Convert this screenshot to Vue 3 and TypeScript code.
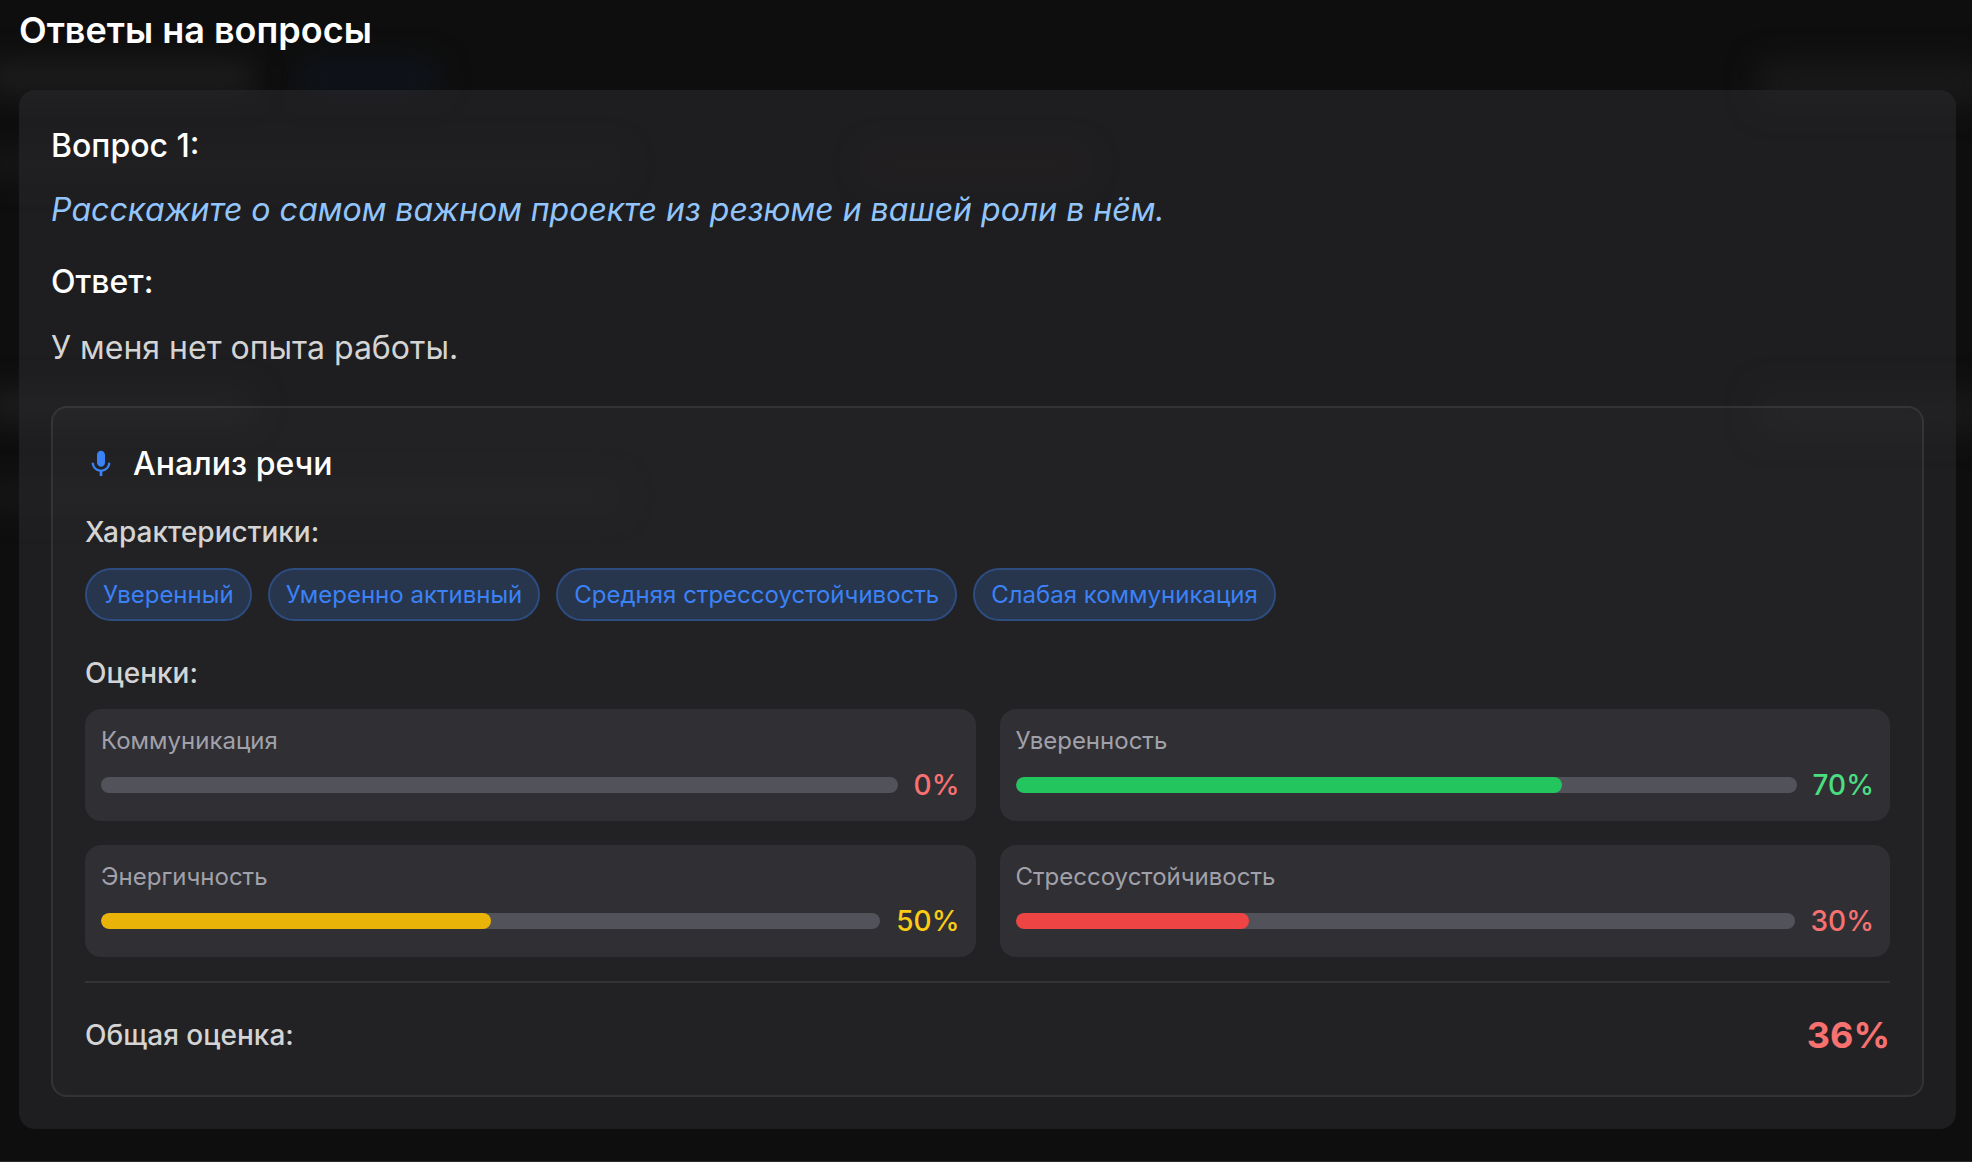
<script setup lang="ts">
type Tone = 'red' | 'green' | 'yellow'

interface Metric {
  id: string
  label: string
  value: number
  tone: Tone
}

const traits: string[] = [
  'Уверенный',
  'Умеренно активный',
  'Средняя стрессоустойчивость',
  'Слабая коммуникация',
]

const metrics: Metric[] = [
  { id: 'communication', label: 'Коммуникация', value: 0, tone: 'red' },
  { id: 'confidence', label: 'Уверенность', value: 70, tone: 'green' },
  { id: 'energy', label: 'Энергичность', value: 50, tone: 'yellow' },
  { id: 'stress', label: 'Стрессоустойчивость', value: 30, tone: 'red' },
]
</script>

<template>
  <main class="page">
    <!-- Blurred content behind the translucent dialog -->
    <div class="backdrop" aria-hidden="true">
      <i class="ghost name"></i>
      <i class="ghost badge"></i>
      <i class="ghost action"></i>
      <i class="ghost meta"></i>
      <i class="ghost alert"></i>
      <i class="ghost name second"></i>
      <i class="ghost action second"></i>
      <i class="ghost meta second"></i>
    </div>

    <section class="answers">
      <h2 class="title">Ответы на вопросы</h2>

      <article class="card">
        <h3 class="heading">Вопрос 1:</h3>
        <p class="question">Расскажите о самом важном проекте из резюме и вашей роли в нём.</p>
        <h3 class="heading">Ответ:</h3>
        <p class="answer">У меня нет опыта работы.</p>

        <section class="analysis">
          <header class="analysis-head">
            <svg class="mic" viewBox="0 0 24 24" aria-hidden="true">
              <path
                d="M12 14c1.66 0 2.99-1.34 2.99-3L15 5c0-1.66-1.34-3-3-3S9 3.34 9 5v6c0 1.66 1.34 3 3 3zm5.3-3c0 3-2.54 5.1-5.3 5.1S6.7 14 6.7 11H5c0 3.41 2.72 6.23 6 6.72V21h2v-3.28c3.28-.48 6-3.3 6-6.72h-1.7z"
              />
            </svg>
            <h4 class="heading">Анализ речи</h4>
          </header>

          <h5 class="label">Характеристики:</h5>
          <ul class="traits">
            <li v-for="trait in traits" :key="trait" class="trait">{{ trait }}</li>
          </ul>

          <h5 class="label">Оценки:</h5>
          <div class="metrics">
            <div v-for="metric in metrics" :key="metric.id" class="metric">
              <span :id="metric.id" class="metric-name">{{ metric.label }}</span>
              <div class="metric-row">
                <div
                  class="track"
                  role="progressbar"
                  :aria-labelledby="metric.id"
                  :aria-valuenow="metric.value"
                  aria-valuemin="0"
                  aria-valuemax="100"
                >
                  <div class="fill" :class="metric.tone" :style="{ width: metric.value + '%' }"></div>
                </div>
                <span class="value" :class="metric.tone">{{ metric.value }}%</span>
              </div>
            </div>
          </div>

          <footer class="total">
            <span class="label">Общая оценка:</span>
            <strong class="score">36%</strong>
          </footer>
        </section>
      </article>
    </section>
  </main>
</template>

<style>
body {
  margin: 0;
  background: #0e0e0e;
}
</style>

<style scoped>
.page {
  position: relative;
  overflow: hidden;
  font-family: Inter, 'Noto Sans', sans-serif;
  color: #fff;
  border-bottom: 1px solid #2a2a2b;
}

h2,
h3,
h4,
h5,
p,
ul {
  margin: 0;
  padding: 0;
}

.backdrop {
  position: absolute;
  inset: 0;
}

.ghost {
  position: absolute;
  border-radius: 16px;
  filter: blur(14px);
}

.name {
  left: -16px;
  top: 60px;
  width: 272px;
  height: 36px;
  background: #1c1c1c;
}

.badge {
  left: 296px;
  top: 60px;
  width: 144px;
  height: 36px;
  background: #0f141b;
}

.action {
  right: -16px;
  top: 60px;
  width: 232px;
  height: 48px;
  background: #181818;
}

.meta {
  left: -16px;
  top: 148px;
  width: 640px;
  height: 32px;
  background: #161616;
}

.alert {
  left: 864px;
  top: 148px;
  width: 224px;
  height: 32px;
  background: #1d1212;
}

.name.second,
.action.second {
  top: 388px;
}

.meta.second {
  top: 480px;
}

.answers {
  position: relative;
  padding: 2px 16px 32px 19px;
}

.title {
  margin-bottom: 32px;
  font-size: 36px;
  line-height: 56px;
  font-weight: 600;
}

.card {
  padding: 32px;
  border-radius: 16px;
  background: rgba(39, 39, 42, 0.64);
}

.heading {
  font-size: 32px;
  line-height: 48px;
  font-weight: 500;
}

.question {
  margin: 16px 0 24px;
  font-size: 32px;
  line-height: 48px;
  font-style: italic;
  color: #93c5fd;
}

.answer {
  margin: 16px 0 32px;
  font-size: 32px;
  line-height: 52px;
  color: #d4d4d4;
}

.analysis {
  padding: 32px;
  border: 2px solid rgba(255, 255, 255, 0.08);
  border-radius: 16px;
  background: rgba(255, 255, 255, 0.02);
}

.analysis-head {
  display: flex;
  align-items: center;
  gap: 16px;
  margin-bottom: 24px;
}

.mic {
  width: 32px;
  height: 32px;
  fill: #3b82f6;
}

.label {
  font-size: 28px;
  line-height: 40px;
  font-weight: 500;
  color: #d4d4d4;
}

.traits {
  display: flex;
  flex-wrap: wrap;
  gap: 16px;
  margin: 16px 0 32px;
  list-style: none;
}

.trait {
  padding: 8px 16px;
  border: 2px solid rgba(59, 130, 246, 0.3);
  border-radius: 32px;
  background: rgba(59, 130, 246, 0.2);
  font-size: 24px;
  line-height: 33px;
  color: #3b82f6;
}

.metrics {
  display: grid;
  grid-template-columns: repeat(2, minmax(0, 1fr));
  gap: 24px;
  margin: 16px 0 24px;
}

.metric {
  padding: 16px;
  border-radius: 16px;
  background: #302f34;
}

.metric-name {
  display: block;
  margin-bottom: 8px;
  font-size: 24px;
  line-height: 32px;
  color: #a1a1aa;
}

.metric-row {
  display: flex;
  align-items: center;
  gap: 16px;
}

.track {
  flex: 1;
  height: 16px;
  border-radius: 8px;
  background: #52525b;
  overflow: hidden;
}

.fill {
  height: 100%;
  border-radius: 8px;
}

.fill.red {
  background: #ef4444;
}

.fill.green {
  background: #22c55e;
}

.fill.yellow {
  background: #eab308;
}

.value {
  font-size: 28px;
  line-height: 40px;
  font-weight: 500;
}

.value.red,
.score {
  color: #f87171;
}

.value.green {
  color: #4ade80;
}

.value.yellow {
  color: #facc15;
}

.total {
  display: flex;
  align-items: center;
  justify-content: space-between;
  padding-top: 24px;
  border-top: 2px solid rgba(255, 255, 255, 0.08);
}

.score {
  font-size: 36px;
  line-height: 56px;
  font-weight: 700;
}
</style>
